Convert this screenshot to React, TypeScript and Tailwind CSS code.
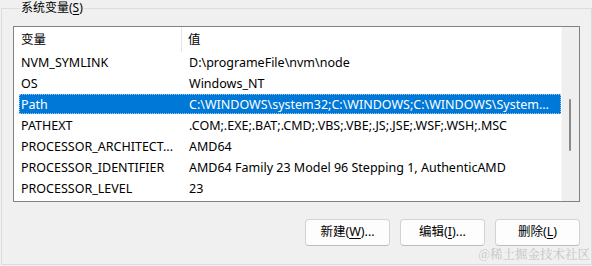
import React from "react";

const vars = [
  { name: "NVM_SYMLINK", value: "D:\\programeFile\\nvm\\node" },
  { name: "OS", value: "Windows_NT" },
  { name: "Path", value: "C:\\WINDOWS\\system32;C:\\WINDOWS;C:\\WINDOWS\\System...", selected: true },
  { name: "PATHEXT", value: ".COM;.EXE;.BAT;.CMD;.VBS;.VBE;.JS;.JSE;.WSF;.WSH;.MSC" },
  { name: "PROCESSOR_ARCHITECT...", value: "AMD64" },
  { name: "PROCESSOR_IDENTIFIER", value: "AMD64 Family 23 Model 96 Stepping 1, AuthenticAMD" },
  { name: "PROCESSOR_LEVEL", value: "23" },
];

const Btn = ({ label, hot, tail }: { label: string; hot: string; tail: string }) => (
  <button className="w-[85px] h-[27px] bg-[#fdfdfd] border border-[#d3d3d3] border-b-[#bdbdbd] rounded-[4px] text-[12.5px] text-black leading-none">
    {label}(<span className="underline underline-offset-2">{hot}</span>){tail}
  </button>
);

export default function App() {
  return (
    <div className="relative w-[592px] h-[266px] bg-[#f0f0f0] overflow-hidden text-black font-['Noto_Sans','Noto_Sans_CJK_SC',sans-serif] text-[12.5px]">
      <fieldset className="ml-[1px] w-[589px] h-[265px] border border-[#dcdcdc] px-[11px]">
        <legend className="ml-[7px] px-[1px] h-[16px] leading-[16px] text-[12px]">
          系统变量(<span className="underline underline-offset-2">S</span>)
        </legend>
        <div className="mt-[10px] w-[567px] h-[176px] border border-[#828282] bg-white flex">
          <div className="w-[547px] flex flex-col">
            <div className="h-[25px] flex items-center">
              <div className="w-[168px] h-full pl-[7px] pt-[2px] flex items-center border-r border-[#e5e5e5]">变量</div>
              <div className="pl-[6px] pt-[2px]">值</div>
            </div>
            {vars.map((v, i) => (
              <div key={i} className="h-[21px] pl-[5px]">
                <div
                  className={`h-[20px] pt-[3px] flex items-center whitespace-nowrap ${
                    v.selected ? "bg-[#0078d7] text-white outline-1 outline-dotted outline-offset-[-1px] outline-[#9cc7ee]" : ""
                  }`}
                >
                  <div className="w-[164px] pl-[2px] shrink-0">{v.name}</div>
                  <div className="pl-[6px]">{v.value}</div>
                </div>
              </div>
            ))}
          </div>
          <div className="w-[18px] bg-[#efefef] border-l border-[#f7f7f7]">
            <div className="ml-[7px] mt-[72px] w-[2px] h-[52px] rounded-full bg-[#8a8a8a]" />
          </div>
        </div>
        <div className="mt-[17px] flex justify-end gap-[10px]">
          <Btn label="新建" hot="W" tail="..." />
          <Btn label="编辑" hot="I" tail="..." />
          <Btn label="删除" hot="L" tail="" />
        </div>
      </fieldset>
      <div className="absolute right-[2px] bottom-[2px] text-[12.5px] text-[#c4c4c4] font-['Noto_Serif_CJK_SC','Noto_Sans_CJK_SC',serif]">
        @稀土掘金技术社区
      </div>
    </div>
  );
}
